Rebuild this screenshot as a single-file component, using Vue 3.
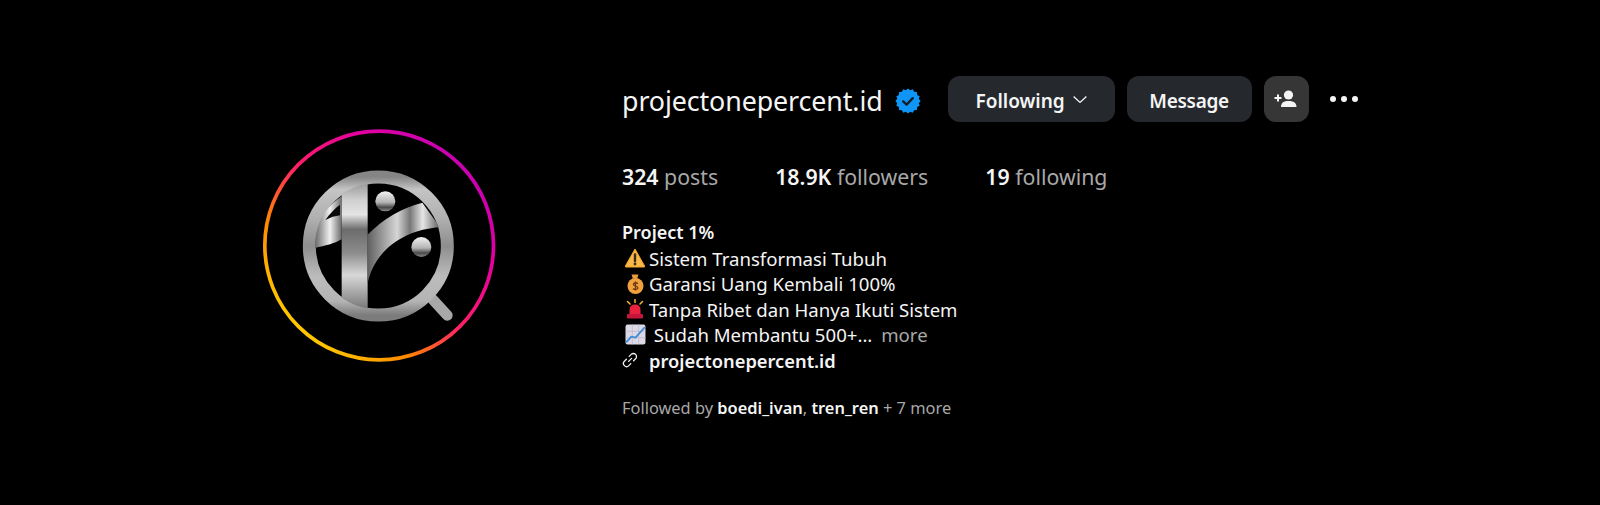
<script setup>
// scalloped edge for the verified badge
const badgePoints = Array.from({ length: 32 }, (_, i) => {
  const r = i % 2 === 0 ? 12.6 : 11
  const a = (i / 32) * Math.PI * 2
  return `${(13 + r * Math.cos(a)).toFixed(2)},${(13 + r * Math.sin(a)).toFixed(2)}`
}).join(' ')

const stats = [
  { value: '324', label: 'posts' },
  { value: '18.9K', label: 'followers' },
  { value: '19', label: 'following' }
]
</script>

<template>
  <main class="profile">
    <svg class="avatar" viewBox="0 0 780 780" width="260" height="260">
      <defs>
        <linearGradient id="ring" gradientUnits="userSpaceOnUse" x1="130" y1="640" x2="640" y2="120">
          <stop offset="0" stop-color="#ffd000" />
          <stop offset="0.25" stop-color="#ff8a00" />
          <stop offset="0.5" stop-color="#ff1f66" />
          <stop offset="0.78" stop-color="#e400a0" />
          <stop offset="1" stop-color="#c800b4" />
        </linearGradient>
        <linearGradient id="rimV" x1="0" y1="0" x2="0" y2="1">
          <stop offset="0" stop-color="#858585" />
          <stop offset="0.09" stop-color="#c4c4c4" />
          <stop offset="0.3" stop-color="#b0b0b0" />
          <stop offset="0.5" stop-color="#8e8e8e" />
          <stop offset="0.72" stop-color="#bcbcbc" />
          <stop offset="0.9" stop-color="#b4b4b4" />
          <stop offset="1" stop-color="#7c7c7c" />
        </linearGradient>
        <linearGradient id="bar" gradientUnits="userSpaceOnUse" x1="0" y1="195" x2="0" y2="565">
          <stop offset="0" stop-color="#a0a0a0" />
          <stop offset="0.12" stop-color="#cfcfcf" />
          <stop offset="0.24" stop-color="#e4e4e4" />
          <stop offset="0.36" stop-color="#6c6c6c" />
          <stop offset="0.55" stop-color="#8c8c8c" />
          <stop offset="0.73" stop-color="#d8d8d8" />
          <stop offset="1" stop-color="#7a7a7a" />
        </linearGradient>
        <linearGradient id="flag" gradientUnits="userSpaceOnUse" x1="197" y1="0" x2="275" y2="0">
          <stop offset="0" stop-color="#6e6e6e" />
          <stop offset="0.55" stop-color="#f0f0f0" />
          <stop offset="1" stop-color="#6a6a6a" />
        </linearGradient>
        <linearGradient id="swoosh" gradientUnits="userSpaceOnUse" x1="352" y1="0" x2="565" y2="0">
          <stop offset="0" stop-color="#5f5f5f" />
          <stop offset="0.22" stop-color="#9c9c9c" />
          <stop offset="0.42" stop-color="#d6d6d6" />
          <stop offset="0.6" stop-color="#777" />
          <stop offset="0.78" stop-color="#e6e6e6" />
          <stop offset="1" stop-color="#6a6a6a" />
        </linearGradient>
        <linearGradient id="ball" x1="0" y1="0" x2="0" y2="1">
          <stop offset="0" stop-color="#f2f2f2" />
          <stop offset="0.55" stop-color="#b4b4b4" />
          <stop offset="0.8" stop-color="#4a4a4a" />
          <stop offset="1" stop-color="#8a8a8a" />
        </linearGradient>
        <clipPath id="lens"><circle cx="385" cy="378" r="190" /></clipPath>
      </defs>

      <circle cx="387.5" cy="376.5" r="343" fill="none" stroke="url(#ring)" stroke-width="11" />

      <path d="M548 538 L592 586" stroke="#a8a8a8" stroke-width="32" stroke-linecap="round" />
      <circle cx="385" cy="378" r="207" fill="#000" stroke="url(#rimV)" stroke-width="39" />

      <g clip-path="url(#lens)">
        <path d="M190 385 C222 378 252 372 275 358 L275 228 C245 250 215 280 198 320 Z" fill="url(#flag)" />
        <path d="M226 300 C240 280 256 264 270 254 L270 286 Q248 288 226 300 Z" fill="#0a0a0a" />
        <path d="M275 180 H353 V570 H275 Z" fill="url(#bar)" />
        <path d="M352 345 C400 295 455 265 517 248 L570 322 C470 328 375 385 353 490 L352 570 Z" fill="url(#swoosh)" />
      </g>

      <circle cx="406" cy="244" r="30" fill="url(#ball)" />
      <circle cx="514" cy="381" r="30" fill="url(#ball)" />
    </svg>

    <section class="info">
      <header class="top">
        <h1 class="username">projectonepercent.id</h1>
        <svg class="badge" viewBox="0 0 26 26" width="26" height="26">
          <polygon :points="badgePoints" fill="#0f95f6" />
          <path d="M8.2 13.4 L11.6 16.6 L17.8 10.2" fill="none" stroke="#13202c" stroke-width="2.4" stroke-linecap="round" stroke-linejoin="round" />
        </svg>
        <button class="btn following">
          <span>Following</span>
          <svg viewBox="0 0 14 7" width="14" height="7">
            <path d="M0.6 0.6 L7 6.4 L13.4 0.6" fill="none" stroke="#f5f5f5" stroke-width="1.3" />
          </svg>
        </button>
        <button class="btn message"><span>Message</span></button>
        <button class="btn add">
          <svg viewBox="0 0 24 18" width="24" height="18">
            <circle cx="14.5" cy="5" r="4.6" fill="#f5f5f5" />
            <path d="M7 17 C7 12.5 10 11 14.5 11 C19 11 22.5 12.5 22.5 17 Z" fill="#f5f5f5" />
            <path d="M0.5 8 H7.5 M4 4.6 V11.4" stroke="#f5f5f5" stroke-width="2" />
          </svg>
        </button>
        <div class="more-dots"><i /><i /><i /></div>
      </header>

      <ul class="stats">
        <li v-for="s in stats" :key="s.label"><b>{{ s.value }}</b> {{ s.label }}</li>
      </ul>

      <div class="bio">
        <div class="name">Project 1%</div>
        <div class="line">
          <span class="emoji">
            <svg viewBox="0 0 20 20" width="20" height="20">
              <path d="M10 1 L19.6 18 Q20 19 19 19 H1 Q0 19 0.4 18 Z" fill="#f7b84a" stroke="#f5a623" stroke-linejoin="round" />
              <path d="M10 6.5 V13" stroke="#3a2a1a" stroke-width="2.4" stroke-linecap="round" />
              <circle cx="10" cy="16" r="1.4" fill="#3a2a1a" />
            </svg>
          </span>Sistem Transformasi Tubuh
        </div>
        <div class="line">
          <span class="emoji">
            <svg viewBox="0 0 20 20" width="20" height="20">
              <path d="M6.5 0.5 L13.5 0.5 L12 5 L8 5 Z" fill="#e89a3c" />
              <rect x="7.6" y="4" width="4.8" height="1.6" fill="#8a4a1a" />
              <circle cx="10.5" cy="12" r="8" fill="#f0a03c" />
              <path d="M13 9.6 Q10.5 8 8.8 9.4 Q7.6 11 10.5 12 Q13.6 13 12.6 14.8 Q10.5 16.2 8 14.6 M10.5 7.6 V16.6" fill="none" stroke="#6b3a12" stroke-width="1.3" />
            </svg>
          </span>Garansi Uang Kembali 100%
        </div>
        <div class="line">
          <span class="emoji">
            <svg viewBox="0 0 20 20" width="20" height="20">
              <path d="M4.5 15 V11 Q4.5 5.5 10 5.5 Q15.5 5.5 15.5 11 V15 Z" fill="#e8213f" />
              <rect x="2" y="15" width="16" height="4.5" rx="1" fill="#c4163a" />
              <path d="M10 0.5 V3.5 M2.5 2.5 L5 5 M17.5 2.5 L15 5" stroke="#f5b33c" stroke-width="1.5" stroke-linecap="round" />
            </svg>
          </span>Tanpa Ribet dan Hanya Ikuti Sistem
        </div>
        <div class="line">
          <span class="emoji">
            <svg viewBox="0 0 20 20" width="21" height="21">
              <rect x="0.5" y="0.5" width="19" height="19" rx="2" fill="#dcd8e6" />
              <path d="M0.5 7 H19.5 M0.5 13 H19.5 M7 0.5 V19.5 M13 0.5 V19.5" stroke="#bdb8cc" stroke-width="0.7" />
              <path d="M1.5 17 L6 12 L10 13 L18.5 3.5" fill="none" stroke="#3d8ed8" stroke-width="1.7" stroke-linecap="round" stroke-linejoin="round" />
            </svg>
          </span>&nbsp;Sudah Membantu 500+... <span class="muted">more</span>
        </div>
        <div class="line link">
          <svg class="link-icon" viewBox="0 0 16 16" width="16" height="16">
            <path d="M6.6 9.4 L9.6 6.4 M7.2 4.4 L9.2 2.4 A3.1 3.1 0 0 1 13.6 6.8 L11.6 8.8 M8.8 11.6 L6.8 13.6 A3.1 3.1 0 0 1 2.4 9.2 L4.4 7.2" fill="none" stroke="#f0f0f0" stroke-width="1.3" stroke-linecap="round" />
          </svg>
          <b>projectonepercent.id</b>
        </div>
      </div>

      <p class="followed">Followed by <b>boedi_ivan</b>, <b>tren_ren</b> + 7 more</p>
    </section>
  </main>
</template>

<style>
html,
body {
  background: #000;
}
</style>

<style scoped>
.profile {
  display: flex;
  height: 505px;
  box-sizing: border-box;
  padding: 76px 0 0 250px;
  background: #000;
  color: #f5f5f5;
  font-family: "Noto Sans", "Open Sans", sans-serif;
  overflow: hidden;
}

.avatar {
  flex: none;
  margin-top: 44px;
}

.info {
  margin-left: 112px;
}

.top {
  display: flex;
  align-items: center;
  height: 46px;
}

.username {
  margin: 0;
  padding-top: 3px;
  font-size: 26.8px;
  font-weight: 400;
  line-height: 45px;
  letter-spacing: -0.1px;
}

.badge {
  margin: 4px 27px 0 12px;
}

.btn {
  display: flex;
  align-items: center;
  justify-content: center;
  gap: 8px;
  height: 46px;
  border: 0;
  border-radius: 12px;
  background: #25292e;
  color: #f5f5f5;
  font: 600 19px "Noto Sans", "Open Sans", sans-serif;
  padding: 0;
}

.btn span {
  padding-top: 3px;
}

.following {
  width: 167px;
}

.message {
  width: 125px;
  margin-left: 12px;
  letter-spacing: -0.3px;
}

.add {
  width: 45px;
  margin-left: 12px;
  background: #363636;
}

.more-dots {
  display: flex;
  gap: 5px;
  margin-left: 21px;
}

.more-dots i {
  width: 6px;
  height: 6px;
  border-radius: 50%;
  background: #f5f5f5;
}

.stats {
  display: flex;
  gap: 57px;
  margin: 40px 0 0;
  padding: 0;
  list-style: none;
  font-size: 21.3px;
  line-height: 30px;
  color: #a8a8a8;
}

.stats b {
  color: #f5f5f5;
  font-weight: 600;
}

.bio {
  margin-top: 28px;
  font-size: 18.6px;
  line-height: 25.5px;
}

.name {
  font-size: 18px;
  font-weight: 600;
}

.line {
  display: flex;
  align-items: center;
  white-space: pre-wrap;
}

.emoji {
  display: inline-flex;
  width: 27px;
  flex: none;
  padding-left: 3px;
  box-sizing: border-box;
}

.muted {
  color: #a8a8a8;
  margin-left: 4px;
}

.link b {
  font-size: 18.3px;
  font-weight: 600;
}

.link-icon {
  width: 16px;
  margin-right: 11px;
}

.followed {
  margin: 24px 0 0;
  font-size: 16.4px;
  line-height: 22px;
  color: #a8a8a8;
}

.followed b {
  color: #f5f5f5;
  font-weight: 600;
}
</style>
